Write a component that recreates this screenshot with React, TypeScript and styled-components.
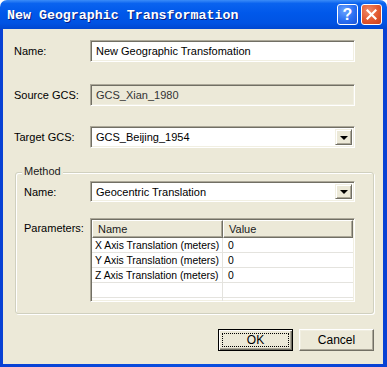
import styled, { createGlobalStyle } from 'styled-components';

const GlobalStyle = createGlobalStyle`
  html, body {
    margin: 0;
    padding: 0;
    background: #fff;
  }
  body {
    font-family: "Liberation Sans", Arial, sans-serif;
    font-size: 11px;
    color: #000;
  }
`;

const Window = styled.div`
  width: 387px;
  height: 367px;
  display: flex;
  flex-direction: column;
  border-radius: 7px 7px 0 0;
  overflow: hidden;
`;

const TitleBar = styled.div`
  height: 29px;
  flex: none;
  display: flex;
  align-items: center;
  padding: 0 5px 0 7px;
  box-sizing: border-box;
  background: linear-gradient(
    #3b8cf8 0%,
    #0a63ef 12%,
    #0058ea 45%,
    #0053e3 80%,
    #0047d0 100%
  );
`;

const Title = styled.div`
  flex: 1;
  font-family: "Liberation Mono", "DejaVu Sans Mono", monospace;
  font-weight: bold;
  font-size: 13.3px;
  color: #fff;
  text-shadow: 1px 1px 0 #0a1e80;
  margin-top: 2px;
`;

const CaptionButton = styled.div<{ $kind: 'help' | 'close' }>`
  width: 21px;
  height: 21px;
  box-sizing: border-box;
  border: 1px solid #fff;
  border-radius: 3px;
  margin-left: ${p => (p.$kind === 'close' ? '3px' : '0')};
  display: flex;
  align-items: center;
  justify-content: center;
  color: #fff;
  font-family: "Liberation Sans", Arial, sans-serif;
  font-weight: bold;
  font-size: 16px;
  background: ${p =>
    p.$kind === 'close'
      ? 'radial-gradient(circle at 35% 30%, #f08a6a 0%, #e2582f 55%, #c8401c 100%)'
      : 'radial-gradient(circle at 35% 30%, #6aa4ff 0%, #2a6ff2 55%, #1a54d8 100%)'};
`;

const Frame = styled.div`
  flex: 1;
  display: flex;
  padding: 0 4px 3px 3px;
  background: linear-gradient(90deg, #0841d4 0%, #0a4fe0 50%, #0841d4 100%);
`;

const Client = styled.div`
  flex: 1;
  background: #ece9d8;
  padding: 11px 9px 12px 11px;
  display: flex;
  flex-direction: column;
`;

const FieldRow = styled.div<{ $label: number; $gap: number }>`
  display: grid;
  grid-template-columns: ${p => p.$label}px 265px;
  align-items: center;
  margin-top: ${p => p.$gap}px;
`;

const Label = styled.div`
  white-space: nowrap;
`;

const Field = styled.div<{ $disabled?: boolean; $h?: number }>`
  height: ${p => p.$h ?? 22}px;
  box-sizing: border-box;
  display: flex;
  align-items: center;
  border: 1px solid;
  border-color: #aca899 #fff #fff #aca899;
  box-shadow: inset 1px 1px 0 #716f64, inset -1px -1px 0 #f1efe2;
  background: ${p => (p.$disabled ? '#ece9d8' : '#fff')};
  color: ${p => (p.$disabled ? '#333' : '#000')};
  padding: 2px;
`;

const FieldText = styled.span`
  flex: 1;
  padding-left: 3px;
  white-space: nowrap;
  overflow: hidden;
`;

const DropButton = styled.div`
  width: 17px;
  align-self: stretch;
  box-sizing: border-box;
  background: #ece9d8;
  border: 1px solid;
  border-color: #f1efe2 #716f64 #716f64 #f1efe2;
  box-shadow: inset 1px 1px 0 #fff, inset -1px -1px 0 #aca899;
  display: flex;
  align-items: center;
  justify-content: center;
`;

const Arrow = styled.div`
  width: 0;
  height: 0;
  border-left: 4px solid transparent;
  border-right: 4px solid transparent;
  border-top: 4px solid #000;
  margin-top: 1px;
`;

const Group = styled.div`
  position: relative;
  margin: 24px 0 0 1px;
  width: 359px;
  box-sizing: border-box;
  border: 1px solid #d0d0bf;
  border-radius: 3px;
  box-shadow: inset 1px 1px 0 #fff, 1px 1px 0 #fff;
  padding: 8px 0 11px 8px;
`;

const GroupCaption = styled.span`
  position: absolute;
  top: -8px;
  left: 6px;
  padding: 0 2px;
  background: #ece9d8;
  color: #1a1a1a;
  line-height: 13px;
`;

const ParamRow = styled.div`
  display: grid;
  grid-template-columns: 66px 265px;
  align-items: start;
  margin-top: 16px;
`;

const ParamLabel = styled.div`
  padding-top: 4px;
`;

const Grid = styled.div`
  height: 84px;
  box-sizing: border-box;
  border: 1px solid;
  border-color: #aca899 #fff #fff #aca899;
  box-shadow: inset 1px 1px 0 #716f64, inset -1px -1px 0 #f1efe2;
  padding: 1px;
  background: #fff;
  overflow: hidden;
`;

const HeaderRow = styled.div`
  display: grid;
  grid-template-columns: 131px 130px;
  height: 18px;
`;

const HeaderCell = styled.div`
  box-sizing: border-box;
  background: #ece9d8;
  border: 1px solid;
  border-color: #fff #716f64 #716f64 #fff;
  box-shadow: inset -1px -1px 0 #aca899;
  padding-left: 5px;
  display: flex;
  align-items: center;
  color: #1a1a1a;
`;

const DataRow = styled.div`
  display: grid;
  grid-template-columns: 131px 130px;
  height: 14px;
  border-bottom: 1px solid #e4e3de;
`;

const Cell = styled.div<{ $first?: boolean }>`
  padding-left: ${p => (p.$first ? '3px' : '5px')};
  border-right: ${p => (p.$first ? '1px solid #e4e3de' : 'none')};
  display: flex;
  align-items: center;
  white-space: nowrap;
  overflow: hidden;
  font-size: 10.4px;
  line-height: 13px;
`;

const ButtonBar = styled.div`
  display: flex;
  justify-content: flex-end;
  gap: 6px;
  margin-top: 15px;
`;

const Button = styled.div<{ $default?: boolean }>`
  width: 75px;
  height: 22px;
  box-sizing: border-box;
  background: #ece9d8;
  display: flex;
  align-items: stretch;
  padding: 3px;
  border: 1px solid;
  border-color: ${p => (p.$default ? '#000' : '#fff #716f64 #716f64 #fff')};
  box-shadow: ${p =>
    p.$default
      ? 'inset 1px 1px 0 #fff, inset -1px -1px 0 #716f64, inset -2px -2px 0 #aca899'
      : 'inset -1px -1px 0 #aca899, inset 1px 1px 0 #f1efe2'};
  font-size: 12px;
`;

const ButtonFace = styled.span<{ $focus?: boolean }>`
  flex: 1;
  display: flex;
  align-items: center;
  justify-content: center;
  border: 1px dotted ${p => (p.$focus ? '#000' : 'transparent')};
`;

const params = [
  { name: 'X Axis Translation (meters)', value: '0' },
  { name: 'Y Axis Translation (meters)', value: '0' },
  { name: 'Z Axis Translation (meters)', value: '0' },
  { name: '', value: '' },
  { name: '', value: '' },
];

export default function App() {
  return (
    <>
      <GlobalStyle />
      <Window>
        <TitleBar>
          <Title>New Geographic Transformation</Title>
          <CaptionButton $kind="help">?</CaptionButton>
          <CaptionButton $kind="close">
            <svg width="11" height="11" viewBox="0 0 11 11">
              <path d="M1.5 1.5 L9.5 9.5 M9.5 1.5 L1.5 9.5" stroke="#fff" strokeWidth="2.2" strokeLinecap="square" />
            </svg>
          </CaptionButton>
        </TitleBar>
        <Frame>
          <Client>
            <FieldRow $label={76} $gap={0}>
              <Label>Name:</Label>
              <Field>
                <FieldText>New Geographic Transfomation</FieldText>
              </Field>
            </FieldRow>
            <FieldRow $label={76} $gap={22}>
              <Label>Source GCS:</Label>
              <Field $disabled>
                <FieldText>GCS_Xian_1980</FieldText>
              </Field>
            </FieldRow>
            <FieldRow $label={76} $gap={20}>
              <Label>Target GCS:</Label>
              <Field $h={22}>
                <FieldText>GCS_Beijing_1954</FieldText>
                <DropButton>
                  <Arrow />
                </DropButton>
              </Field>
            </FieldRow>

            <Group>
              <GroupCaption>Method</GroupCaption>
              <FieldRow $label={66} $gap={0}>
                <Label>Name:</Label>
                <Field $h={21}>
                  <FieldText>Geocentric Translation</FieldText>
                  <DropButton>
                    <Arrow />
                  </DropButton>
                </Field>
              </FieldRow>
              <ParamRow>
                <ParamLabel>Parameters:</ParamLabel>
                <Grid>
                  <HeaderRow>
                    <HeaderCell>Name</HeaderCell>
                    <HeaderCell>Value</HeaderCell>
                  </HeaderRow>
                  {params.map((p, i) => (
                    <DataRow key={i}>
                      <Cell $first>{p.name}</Cell>
                      <Cell>{p.value}</Cell>
                    </DataRow>
                  ))}
                </Grid>
              </ParamRow>
            </Group>

            <ButtonBar>
              <Button $default>
                <ButtonFace $focus>OK</ButtonFace>
              </Button>
              <Button>
                <ButtonFace>Cancel</ButtonFace>
              </Button>
            </ButtonBar>
          </Client>
        </Frame>
      </Window>
    </>
  );
}
